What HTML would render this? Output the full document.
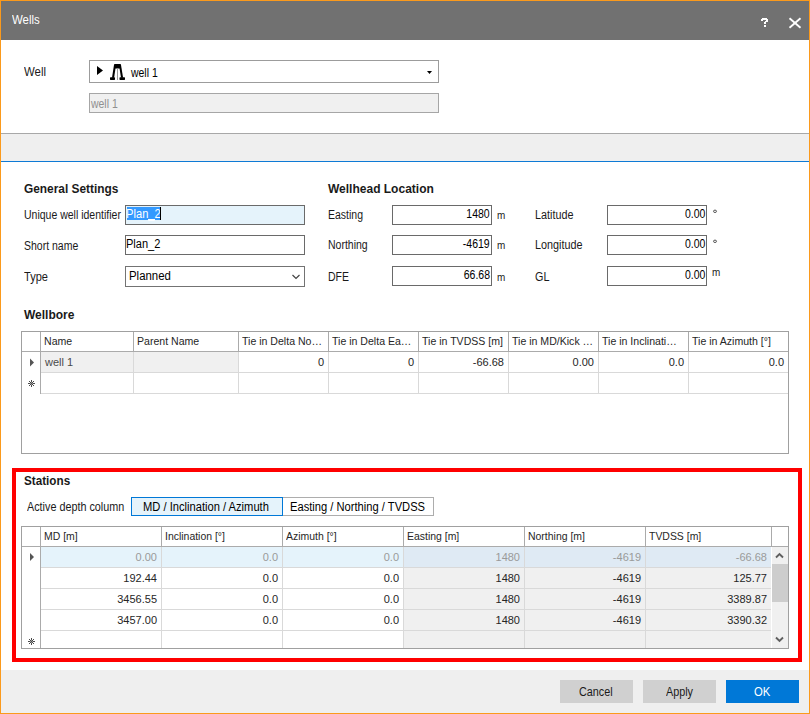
<!DOCTYPE html><html><head><meta charset="utf-8"><style>
html,body{margin:0;padding:0;}
body{width:810px;height:714px;position:relative;overflow:hidden;background:#fff;font-family:"Liberation Sans",sans-serif;}
.a{position:absolute;box-sizing:border-box;}
.t{white-space:nowrap;}
svg{position:absolute;left:0;top:0;}
</style></head><body>
<div class="a" style="left:1px;top:1px;width:808px;height:39px;background:#717171;"></div>
<div class="a t" style="top:14px;font-size:12px;line-height:12px;color:#fff;left:12px;transform:scaleX(0.95);transform-origin:0 0;">Wells</div>
<svg width="810" height="714"><g stroke="#fff" stroke-width="1.9" fill="none"><line x1="789.5" y1="18.3" x2="800.5" y2="27.7"/><line x1="800.5" y1="18.3" x2="789.5" y2="27.7"/></g><g fill="#fff" shape-rendering="crispEdges"><rect x="762" y="18" width="5" height="2"/><rect x="761" y="19" width="2" height="2"/><rect x="766" y="19" width="2" height="3"/><rect x="765" y="21" width="2" height="1"/><rect x="764" y="22" width="2" height="2"/><rect x="764" y="25" width="2" height="2"/></g></svg>
<div class="a t" style="top:66px;font-size:12px;line-height:12px;color:#1a1a1a;left:24px;transform:scaleX(0.95);transform-origin:0 0;">Well</div>
<div class="a" style="left:89px;top:60px;width:350px;height:23px;background:#fff;box-shadow:inset 0 0 0 1px #9c9c9c;"></div>
<svg width="810" height="714"><polygon points="97,66 103,70.5 97,75" fill="#000"/><polygon points="427,71 432,71 429.5,74" fill="#000"/><rect x="114" y="64" width="7" height="4.5" rx="0.4" fill="#000"/><polygon points="114,65 116,65 114.1,77.8 112,77.8" fill="#000"/><polygon points="119,65 121,65 123.1,77.8 121,77.8" fill="#000"/><rect x="110" y="77.3" width="5" height="2.6" rx="0.6" fill="#000"/><rect x="119.5" y="77.3" width="5.5" height="2.6" rx="0.6" fill="#000"/><line x1="117.5" y1="68.5" x2="117.5" y2="80" stroke="#999" stroke-width="1"/></svg>
<div class="a t" style="top:67px;font-size:12px;line-height:12px;color:#000;left:131px;transform:scaleX(0.87);transform-origin:0 0;">well 1</div>
<div class="a" style="left:89px;top:93px;width:350px;height:20px;background:#f0f0f0;box-shadow:inset 0 0 0 1px #a6a6a6;"></div>
<div class="a t" style="top:98px;font-size:12px;line-height:12px;color:#8f8f8f;left:91px;transform:scaleX(0.87);transform-origin:0 0;">well 1</div>
<div class="a" style="left:1px;top:133px;width:808px;height:1px;background:#a8a8a8;"></div>
<div class="a" style="left:1px;top:134px;width:808px;height:27px;background:#efefef;"></div>
<div class="a" style="left:1px;top:161px;width:808px;height:1px;background:#0e7ad5;"></div>
<div class="a t" style="top:183px;font-size:12px;line-height:12px;color:#1a1a1a;font-weight:bold;left:24px;transform:scaleX(0.99);transform-origin:0 0;">General Settings</div>
<div class="a t" style="top:209px;font-size:12px;line-height:12px;color:#1a1a1a;left:24px;transform:scaleX(0.875);transform-origin:0 0;">Unique well identifier</div>
<div class="a t" style="top:240px;font-size:12px;line-height:12px;color:#1a1a1a;left:24px;transform:scaleX(0.875);transform-origin:0 0;">Short name</div>
<div class="a t" style="top:271px;font-size:12px;line-height:12px;color:#1a1a1a;left:24px;transform:scaleX(0.92);transform-origin:0 0;">Type</div>
<div class="a" style="left:125px;top:205px;width:180px;height:20px;background:#e5f3fb;box-shadow:inset 0 0 0 1px #6a6a6a;"></div>
<div class="a" style="left:127px;top:207px;width:34px;height:13px;background:#3399ff;"></div>
<div class="a t" style="top:208px;font-size:12px;line-height:12px;color:#fff;left:126px;transform:scaleX(0.93);transform-origin:0 0;">Plan_2</div>
<div class="a" style="left:148px;top:219px;width:7px;height:1px;background:#ffffff;"></div>
<div class="a" style="left:160px;top:207px;width:1px;height:13px;background:#000;"></div>
<div class="a" style="left:125px;top:235px;width:180px;height:20px;background:#fff;box-shadow:inset 0 0 0 1px #6a6a6a;"></div>
<div class="a t" style="top:238px;font-size:12px;line-height:12px;color:#000;left:126px;transform:scaleX(0.92);transform-origin:0 0;">Plan_2</div>
<div class="a" style="left:125px;top:266px;width:180px;height:21px;background:#fff;box-shadow:inset 0 0 0 1px #737373;"></div>
<div class="a t" style="top:270px;font-size:12px;line-height:12px;color:#000;left:129px;transform:scaleX(0.95);transform-origin:0 0;">Planned</div>
<svg width="810" height="714"><polyline points="292.5,275 296,278.5 299.5,275" stroke="#444" stroke-width="1.2" fill="none"/></svg>
<div class="a t" style="top:183px;font-size:12px;line-height:12px;color:#1a1a1a;font-weight:bold;left:328px;">Wellhead Location</div>
<div class="a t" style="top:209px;font-size:12px;line-height:12px;color:#1a1a1a;left:328px;transform:scaleX(0.875);transform-origin:0 0;">Easting</div>
<div class="a" style="left:392px;top:205px;width:100px;height:20px;background:#fff;box-shadow:inset 0 0 0 1px #6a6a6a;"></div>
<div class="a t" style="top:208px;font-size:12px;line-height:12px;color:#000;right:320px;transform:scaleX(0.875);transform-origin:100% 0;">1480</div>
<div class="a t" style="top:210px;font-size:11px;line-height:11px;color:#1a1a1a;left:497px;transform:scaleX(0.9);transform-origin:0 0;">m</div>
<div class="a t" style="top:239px;font-size:12px;line-height:12px;color:#1a1a1a;left:328px;transform:scaleX(0.875);transform-origin:0 0;">Northing</div>
<div class="a" style="left:392px;top:235px;width:100px;height:20px;background:#fff;box-shadow:inset 0 0 0 1px #6a6a6a;"></div>
<div class="a t" style="top:238px;font-size:12px;line-height:12px;color:#000;right:320px;transform:scaleX(0.875);transform-origin:100% 0;">-4619</div>
<div class="a t" style="top:240px;font-size:11px;line-height:11px;color:#1a1a1a;left:497px;transform:scaleX(0.9);transform-origin:0 0;">m</div>
<div class="a t" style="top:271px;font-size:12px;line-height:12px;color:#1a1a1a;left:328px;transform:scaleX(0.875);transform-origin:0 0;">DFE</div>
<div class="a" style="left:392px;top:266px;width:100px;height:20px;background:#fff;box-shadow:inset 0 0 0 1px #6a6a6a;"></div>
<div class="a t" style="top:269px;font-size:12px;line-height:12px;color:#000;right:320px;transform:scaleX(0.875);transform-origin:100% 0;">66.68</div>
<div class="a t" style="top:272px;font-size:11px;line-height:11px;color:#1a1a1a;left:497px;transform:scaleX(0.9);transform-origin:0 0;">m</div>
<div class="a t" style="top:209px;font-size:12px;line-height:12px;color:#1a1a1a;left:535px;transform:scaleX(0.9);transform-origin:0 0;">Latitude</div>
<div class="a" style="left:607px;top:205px;width:100px;height:20px;background:#fff;box-shadow:inset 0 0 0 1px #6a6a6a;"></div>
<div class="a t" style="top:208px;font-size:12px;line-height:12px;color:#000;right:105px;transform:scaleX(0.875);transform-origin:100% 0;">0.00</div>
<div class="a t" style="top:239px;font-size:12px;line-height:12px;color:#1a1a1a;left:535px;transform:scaleX(0.9);transform-origin:0 0;">Longitude</div>
<div class="a" style="left:607px;top:235px;width:100px;height:20px;background:#fff;box-shadow:inset 0 0 0 1px #6a6a6a;"></div>
<div class="a t" style="top:238px;font-size:12px;line-height:12px;color:#000;right:105px;transform:scaleX(0.875);transform-origin:100% 0;">0.00</div>
<div class="a t" style="top:271px;font-size:12px;line-height:12px;color:#1a1a1a;left:535px;transform:scaleX(0.9);transform-origin:0 0;">GL</div>
<div class="a" style="left:607px;top:266px;width:100px;height:20px;background:#fff;box-shadow:inset 0 0 0 1px #6a6a6a;"></div>
<div class="a t" style="top:269px;font-size:12px;line-height:12px;color:#000;right:105px;transform:scaleX(0.875);transform-origin:100% 0;">0.00</div>
<svg width="810" height="714"><g fill="none" stroke="#555" stroke-width="1"><ellipse cx="715" cy="211.3" rx="1.5" ry="1.2"/><ellipse cx="715" cy="241.3" rx="1.5" ry="1.2"/></g></svg>
<div class="a t" style="top:267px;font-size:11px;line-height:11px;color:#1a1a1a;left:712px;transform:scaleX(0.9);transform-origin:0 0;">m</div>
<div class="a t" style="top:309px;font-size:12px;line-height:12px;color:#1a1a1a;font-weight:bold;left:24px;">Wellbore</div>
<div class="a" style="left:21px;top:331px;width:768px;height:123px;background:#fff;box-shadow:inset 0 0 0 1px #a0a0a0;"></div>
<div class="a" style="left:41px;top:352px;width:197px;height:20px;background:#f0f0f0;"></div>
<div class="a" style="left:22px;top:351px;width:766px;height:1px;background:#ababab;"></div>
<div class="a" style="left:40px;top:332px;width:1px;height:19px;background:#ababab;"></div>
<div class="a" style="left:133px;top:332px;width:1px;height:19px;background:#ababab;"></div>
<div class="a" style="left:238px;top:332px;width:1px;height:19px;background:#ababab;"></div>
<div class="a" style="left:328px;top:332px;width:1px;height:19px;background:#ababab;"></div>
<div class="a" style="left:418px;top:332px;width:1px;height:19px;background:#ababab;"></div>
<div class="a" style="left:508px;top:332px;width:1px;height:19px;background:#ababab;"></div>
<div class="a" style="left:598px;top:332px;width:1px;height:19px;background:#ababab;"></div>
<div class="a" style="left:688px;top:332px;width:1px;height:19px;background:#ababab;"></div>
<div class="a" style="left:40px;top:352px;width:1px;height:42px;background:#ababab;"></div>
<div class="a" style="left:133px;top:352px;width:1px;height:41px;background:#d9d9d9;"></div>
<div class="a" style="left:238px;top:352px;width:1px;height:41px;background:#d9d9d9;"></div>
<div class="a" style="left:328px;top:352px;width:1px;height:41px;background:#d9d9d9;"></div>
<div class="a" style="left:418px;top:352px;width:1px;height:41px;background:#d9d9d9;"></div>
<div class="a" style="left:508px;top:352px;width:1px;height:41px;background:#d9d9d9;"></div>
<div class="a" style="left:598px;top:352px;width:1px;height:41px;background:#d9d9d9;"></div>
<div class="a" style="left:688px;top:352px;width:1px;height:41px;background:#d9d9d9;"></div>
<div class="a" style="left:41px;top:372px;width:747px;height:1px;background:#d9d9d9;"></div>
<div class="a" style="left:41px;top:393px;width:747px;height:1px;background:#d9d9d9;"></div>
<div class="a t" style="top:336px;font-size:11px;line-height:11px;color:#262626;left:44px;transform:scaleX(0.96);transform-origin:0 0;">Name</div>
<div class="a t" style="top:336px;font-size:11px;line-height:11px;color:#262626;left:137px;transform:scaleX(0.96);transform-origin:0 0;">Parent Name</div>
<div class="a t" style="top:336px;font-size:11px;line-height:11px;color:#262626;left:242px;transform:scaleX(0.96);transform-origin:0 0;">Tie in Delta No…</div>
<div class="a t" style="top:336px;font-size:11px;line-height:11px;color:#262626;left:332px;transform:scaleX(0.96);transform-origin:0 0;">Tie in Delta Ea…</div>
<div class="a t" style="top:336px;font-size:11px;line-height:11px;color:#262626;left:422px;transform:scaleX(0.96);transform-origin:0 0;">Tie in TVDSS [m]</div>
<div class="a t" style="top:336px;font-size:11px;line-height:11px;color:#262626;left:512px;transform:scaleX(0.96);transform-origin:0 0;">Tie in MD/Kick …</div>
<div class="a t" style="top:336px;font-size:11px;line-height:11px;color:#262626;left:602px;transform:scaleX(0.96);transform-origin:0 0;">Tie in Inclinati…</div>
<div class="a t" style="top:336px;font-size:11px;line-height:11px;color:#262626;left:692px;transform:scaleX(0.96);transform-origin:0 0;">Tie in Azimuth [°]</div>
<div class="a t" style="top:357px;font-size:11px;line-height:11px;color:#4a4a4a;left:45px;">well 1</div>
<div class="a t" style="top:357px;font-size:11px;line-height:11px;color:#262626;right:486px;">0</div>
<div class="a t" style="top:357px;font-size:11px;line-height:11px;color:#262626;right:396px;">0</div>
<div class="a t" style="top:357px;font-size:11px;line-height:11px;color:#262626;right:306px;">-66.68</div>
<div class="a t" style="top:357px;font-size:11px;line-height:11px;color:#262626;right:216px;">0.00</div>
<div class="a t" style="top:357px;font-size:11px;line-height:11px;color:#262626;right:126px;">0.0</div>
<div class="a t" style="top:357px;font-size:11px;line-height:11px;color:#262626;right:26px;">0.0</div>
<div class="a" style="left:12px;top:468px;width:790px;height:194px;border:4px solid #ff0000;"></div>
<div class="a t" style="top:475px;font-size:12px;line-height:12px;color:#1a1a1a;font-weight:bold;left:24px;transform:scaleX(0.975);transform-origin:0 0;">Stations</div>
<div class="a t" style="top:501px;font-size:12px;line-height:12px;color:#1a1a1a;left:27px;transform:scaleX(0.9);transform-origin:0 0;">Active depth column</div>
<div class="a" style="left:131px;top:497px;width:152px;height:19px;background:#e5f3fb;"></div>
<div class="a" style="left:283px;top:497px;width:151px;height:19px;border:1px solid #adadad;border-left:none;"></div>
<div class="a" style="left:131px;top:497px;width:152px;height:19px;box-shadow:inset 0 0 0 1px #0078d7;"></div>
<div class="a t" style="top:501px;font-size:12px;line-height:12px;color:#000;left:142.5px;transform:scaleX(0.93);transform-origin:0 0;">MD / Inclination / Azimuth</div>
<div class="a t" style="top:501px;font-size:12px;line-height:12px;color:#000;left:290px;transform:scaleX(0.93);transform-origin:0 0;">Easting / Northing / TVDSS</div>
<div class="a" style="left:21px;top:526px;width:768px;height:123px;background:#fff;box-shadow:inset 0 0 0 1px #a0a0a0;"></div>
<div class="a" style="left:404px;top:547px;width:367px;height:101px;background:#f0f0f0;"></div>
<div class="a" style="left:41px;top:547px;width:363px;height:20px;background:#e5f3fb;"></div>
<div class="a" style="left:404px;top:547px;width:367px;height:20px;background:#dfeaf4;"></div>
<div class="a" style="left:772px;top:547px;width:16px;height:101px;background:#f0f0f0;"></div>
<div class="a" style="left:772px;top:564px;width:16px;height:38px;background:#cdcdcd;"></div>
<div class="a" style="left:22px;top:546px;width:766px;height:1px;background:#ababab;"></div>
<div class="a" style="left:40px;top:527px;width:1px;height:19px;background:#ababab;"></div>
<div class="a" style="left:161px;top:527px;width:1px;height:19px;background:#ababab;"></div>
<div class="a" style="left:282px;top:527px;width:1px;height:19px;background:#ababab;"></div>
<div class="a" style="left:403px;top:527px;width:1px;height:19px;background:#ababab;"></div>
<div class="a" style="left:524px;top:527px;width:1px;height:19px;background:#ababab;"></div>
<div class="a" style="left:645px;top:527px;width:1px;height:19px;background:#ababab;"></div>
<div class="a" style="left:771px;top:527px;width:1px;height:19px;background:#ababab;"></div>
<div class="a" style="left:40px;top:547px;width:1px;height:101px;background:#ababab;"></div>
<div class="a" style="left:161px;top:547px;width:1px;height:101px;background:#d9d9d9;"></div>
<div class="a" style="left:282px;top:547px;width:1px;height:101px;background:#d9d9d9;"></div>
<div class="a" style="left:403px;top:547px;width:1px;height:101px;background:#d9d9d9;"></div>
<div class="a" style="left:524px;top:547px;width:1px;height:101px;background:#d9d9d9;"></div>
<div class="a" style="left:645px;top:547px;width:1px;height:101px;background:#d9d9d9;"></div>
<div class="a" style="left:41px;top:567px;width:730px;height:1px;background:#d9d9d9;"></div>
<div class="a" style="left:41px;top:588px;width:730px;height:1px;background:#d9d9d9;"></div>
<div class="a" style="left:41px;top:609px;width:730px;height:1px;background:#d9d9d9;"></div>
<div class="a" style="left:41px;top:630px;width:730px;height:1px;background:#d9d9d9;"></div>
<div class="a t" style="top:531px;font-size:11px;line-height:11px;color:#262626;left:44px;transform:scaleX(0.95);transform-origin:0 0;">MD [m]</div>
<div class="a t" style="top:531px;font-size:11px;line-height:11px;color:#262626;left:165px;transform:scaleX(0.95);transform-origin:0 0;">Inclination [°]</div>
<div class="a t" style="top:531px;font-size:11px;line-height:11px;color:#262626;left:286px;transform:scaleX(0.95);transform-origin:0 0;">Azimuth [°]</div>
<div class="a t" style="top:531px;font-size:11px;line-height:11px;color:#262626;left:407px;transform:scaleX(0.95);transform-origin:0 0;">Easting [m]</div>
<div class="a t" style="top:531px;font-size:11px;line-height:11px;color:#262626;left:528px;transform:scaleX(0.95);transform-origin:0 0;">Northing [m]</div>
<div class="a t" style="top:531px;font-size:11px;line-height:11px;color:#262626;left:649px;transform:scaleX(0.95);transform-origin:0 0;">TVDSS [m]</div>
<div class="a t" style="top:552px;font-size:11px;line-height:11px;color:#9a9a9a;right:653px;">0.00</div>
<div class="a t" style="top:552px;font-size:11px;line-height:11px;color:#9a9a9a;right:532px;">0.0</div>
<div class="a t" style="top:552px;font-size:11px;line-height:11px;color:#9a9a9a;right:411px;">0.0</div>
<div class="a t" style="top:552px;font-size:11px;line-height:11px;color:#9a9a9a;right:290px;">1480</div>
<div class="a t" style="top:552px;font-size:11px;line-height:11px;color:#9a9a9a;right:169px;">-4619</div>
<div class="a t" style="top:552px;font-size:11px;line-height:11px;color:#9a9a9a;right:43px;">-66.68</div>
<div class="a t" style="top:573px;font-size:11px;line-height:11px;color:#262626;right:653px;">192.44</div>
<div class="a t" style="top:573px;font-size:11px;line-height:11px;color:#262626;right:532px;">0.0</div>
<div class="a t" style="top:573px;font-size:11px;line-height:11px;color:#262626;right:411px;">0.0</div>
<div class="a t" style="top:573px;font-size:11px;line-height:11px;color:#262626;right:290px;">1480</div>
<div class="a t" style="top:573px;font-size:11px;line-height:11px;color:#262626;right:169px;">-4619</div>
<div class="a t" style="top:573px;font-size:11px;line-height:11px;color:#262626;right:43px;">125.77</div>
<div class="a t" style="top:594px;font-size:11px;line-height:11px;color:#262626;right:653px;">3456.55</div>
<div class="a t" style="top:594px;font-size:11px;line-height:11px;color:#262626;right:532px;">0.0</div>
<div class="a t" style="top:594px;font-size:11px;line-height:11px;color:#262626;right:411px;">0.0</div>
<div class="a t" style="top:594px;font-size:11px;line-height:11px;color:#262626;right:290px;">1480</div>
<div class="a t" style="top:594px;font-size:11px;line-height:11px;color:#262626;right:169px;">-4619</div>
<div class="a t" style="top:594px;font-size:11px;line-height:11px;color:#262626;right:43px;">3389.87</div>
<div class="a t" style="top:615px;font-size:11px;line-height:11px;color:#262626;right:653px;">3457.00</div>
<div class="a t" style="top:615px;font-size:11px;line-height:11px;color:#262626;right:532px;">0.0</div>
<div class="a t" style="top:615px;font-size:11px;line-height:11px;color:#262626;right:411px;">0.0</div>
<div class="a t" style="top:615px;font-size:11px;line-height:11px;color:#262626;right:290px;">1480</div>
<div class="a t" style="top:615px;font-size:11px;line-height:11px;color:#262626;right:169px;">-4619</div>
<div class="a t" style="top:615px;font-size:11px;line-height:11px;color:#262626;right:43px;">3390.32</div>
<svg width="810" height="714"><polyline points="776,557.5 779.5,554 783,557.5" stroke="#606060" stroke-width="1.9" fill="none"/><polyline points="776,637.5 779.5,641 783,637.5" stroke="#606060" stroke-width="1.9" fill="none"/><polygon points="30,358.5 34,362.5 30,366.5" fill="#555"/><polygon points="30,553 34,557 30,561" fill="#555"/></svg>
<svg width="810" height="714"><rect x="31" y="380" width="1" height="1" fill="#4a4a4a"/><rect x="29" y="381" width="1" height="1" fill="#4a4a4a"/><rect x="31" y="381" width="1" height="1" fill="#4a4a4a"/><rect x="33" y="381" width="1" height="1" fill="#4a4a4a"/><rect x="30" y="382" width="1" height="1" fill="#4a4a4a"/><rect x="32" y="382" width="1" height="1" fill="#4a4a4a"/><rect x="28" y="383" width="1" height="1" fill="#4a4a4a"/><rect x="29" y="383" width="1" height="1" fill="#4a4a4a"/><rect x="31" y="383" width="1" height="1" fill="#4a4a4a"/><rect x="33" y="383" width="1" height="1" fill="#4a4a4a"/><rect x="34" y="383" width="1" height="1" fill="#4a4a4a"/><rect x="30" y="384" width="1" height="1" fill="#4a4a4a"/><rect x="32" y="384" width="1" height="1" fill="#4a4a4a"/><rect x="29" y="385" width="1" height="1" fill="#4a4a4a"/><rect x="31" y="385" width="1" height="1" fill="#4a4a4a"/><rect x="33" y="385" width="1" height="1" fill="#4a4a4a"/><rect x="31" y="386" width="1" height="1" fill="#4a4a4a"/><rect x="31" y="382" width="1" height="1" fill="#a0a0a0"/><rect x="30" y="383" width="1" height="1" fill="#a0a0a0"/><rect x="32" y="383" width="1" height="1" fill="#a0a0a0"/><rect x="31" y="384" width="1" height="1" fill="#a0a0a0"/></svg>
<svg width="810" height="714"><rect x="31" y="638" width="1" height="1" fill="#4a4a4a"/><rect x="29" y="639" width="1" height="1" fill="#4a4a4a"/><rect x="31" y="639" width="1" height="1" fill="#4a4a4a"/><rect x="33" y="639" width="1" height="1" fill="#4a4a4a"/><rect x="30" y="640" width="1" height="1" fill="#4a4a4a"/><rect x="32" y="640" width="1" height="1" fill="#4a4a4a"/><rect x="28" y="641" width="1" height="1" fill="#4a4a4a"/><rect x="29" y="641" width="1" height="1" fill="#4a4a4a"/><rect x="31" y="641" width="1" height="1" fill="#4a4a4a"/><rect x="33" y="641" width="1" height="1" fill="#4a4a4a"/><rect x="34" y="641" width="1" height="1" fill="#4a4a4a"/><rect x="30" y="642" width="1" height="1" fill="#4a4a4a"/><rect x="32" y="642" width="1" height="1" fill="#4a4a4a"/><rect x="29" y="643" width="1" height="1" fill="#4a4a4a"/><rect x="31" y="643" width="1" height="1" fill="#4a4a4a"/><rect x="33" y="643" width="1" height="1" fill="#4a4a4a"/><rect x="31" y="644" width="1" height="1" fill="#4a4a4a"/><rect x="31" y="640" width="1" height="1" fill="#a0a0a0"/><rect x="30" y="641" width="1" height="1" fill="#a0a0a0"/><rect x="32" y="641" width="1" height="1" fill="#a0a0a0"/><rect x="31" y="642" width="1" height="1" fill="#a0a0a0"/></svg>
<div class="a" style="left:1px;top:670px;width:808px;height:43px;background:#efefef;"></div>
<div class="a" style="left:560px;top:680px;width:73px;height:23px;background:#d0d0d0;"></div>
<div class="a" style="left:643px;top:680px;width:73px;height:23px;background:#d0d0d0;"></div>
<div class="a" style="left:726px;top:680px;width:73px;height:23px;background:#0078d7;"></div>
<div class="a t" style="top:686px;font-size:12px;line-height:12px;color:#1a1a1a;left:578.5px;transform:scaleX(0.9);transform-origin:0 0;">Cancel</div>
<div class="a t" style="top:686px;font-size:12px;line-height:12px;color:#1a1a1a;left:665.5px;transform:scaleX(0.9);transform-origin:0 0;">Apply</div>
<div class="a t" style="top:686px;font-size:12px;line-height:12px;color:#fff;left:753.5px;transform:scaleX(0.94);transform-origin:0 0;">OK</div>
<div class="a" style="left:0px;top:0px;width:810px;height:714px;box-shadow:inset 0 0 0 1px #fb9a1c;"></div>
</body></html>
